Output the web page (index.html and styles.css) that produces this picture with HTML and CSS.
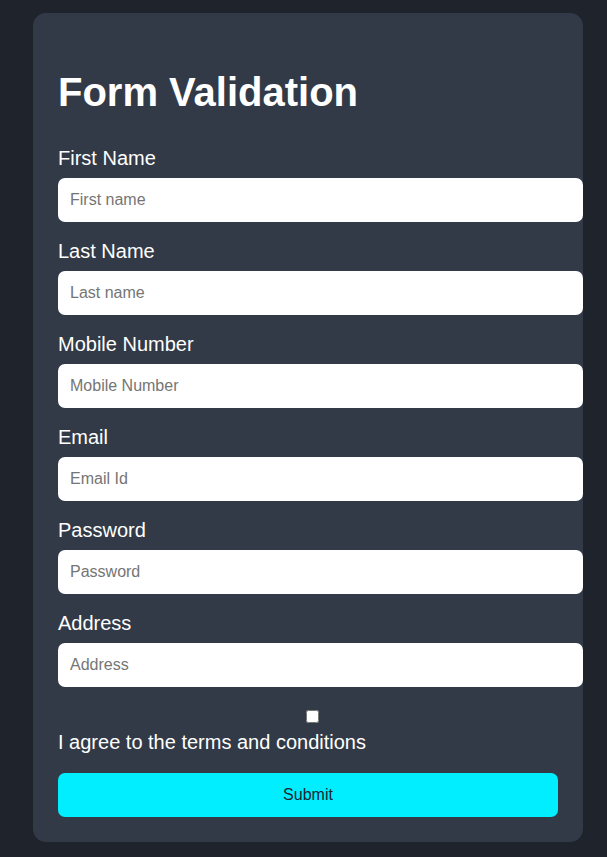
FILE: index.html
```html
<!DOCTYPE html>
<html lang="en">
<head>
<meta charset="utf-8">
<title>Form Validation</title>
<link rel="stylesheet" href="styles.css">
</head>
<body>
<div class="card">
  <h1 class="title">Form Validation</h1>
  <form class="form">
    <div class="field">
      <label class="label" for="fn">First Name</label>
      <input class="input" id="fn" type="text" placeholder="First name">
    </div>
    <div class="field">
      <label class="label" for="ln">Last Name</label>
      <input class="input" id="ln" type="text" placeholder="Last name">
    </div>
    <div class="field">
      <label class="label" for="mn">Mobile Number</label>
      <input class="input" id="mn" type="text" placeholder="Mobile Number">
    </div>
    <div class="field">
      <label class="label" for="em">Email</label>
      <input class="input" id="em" type="text" placeholder="Email Id">
    </div>
    <div class="field">
      <label class="label" for="pw">Password</label>
      <input class="input" id="pw" type="password" placeholder="Password">
    </div>
    <div class="field">
      <label class="label" for="ad">Address</label>
      <input class="input" id="ad" type="text" placeholder="Address">
    </div>
    <div class="terms">
      <input class="check" id="tc" type="checkbox">
      <label class="label terms-label" for="tc">I agree to the terms and conditions</label>
    </div>
    <button class="submit" type="button">Submit</button>
  </form>
</div>
</body>
</html>
```

FILE: styles.css
```css
html, body {
  margin: 0;
  background: #1f232b;
}
body {
  padding: 13px 0 15px 33px;
  font-family: "Liberation Sans", Arial, sans-serif;
}
.card {
  box-sizing: border-box;
  width: 550px;
  padding: 0 25px 25px;
  background: #323a47;
  border-radius: 13px;
}
.title {
  margin: 0;
  padding-top: 56px;
  margin-bottom: 32px;
  font-size: 40px;
  font-weight: bold;
  color: #ffffff;
  line-height: 46px;
}
.form {
  margin: 0;
}
.field {
  margin-bottom: 18px;
}
.label {
  display: block;
  color: #ffffff;
  font-size: 20px;
  line-height: 22px;
  margin-bottom: 9px;
}
.input {
  display: block;
  width: 100%;
  box-sizing: content-box;
  margin: 0;
  padding: 12px 13px 12px 12px;
  height: 20px;
  border: 0;
  border-radius: 7px;
  background: #ffffff;
  font-family: "Liberation Sans", Arial, sans-serif;
  font-size: 16px;
  color: #222;
  outline: none;
}
.input::placeholder {
  color: #757575;
}
.terms {
  padding-top: 5px;
}
.check {
  display: block;
  width: 13px;
  height: 13px;
  margin: 0 auto 8px calc(50% - 2.5px);
}
.terms-label {
  margin-bottom: 20px;
}
.submit {
  display: block;
  width: 100%;
  height: 44px;
  border: 0;
  border-radius: 7px;
  background: #00eeff;
  color: #1d2430;
  font-family: "Liberation Sans", Arial, sans-serif;
  font-size: 16px;
  cursor: pointer;
}
```
